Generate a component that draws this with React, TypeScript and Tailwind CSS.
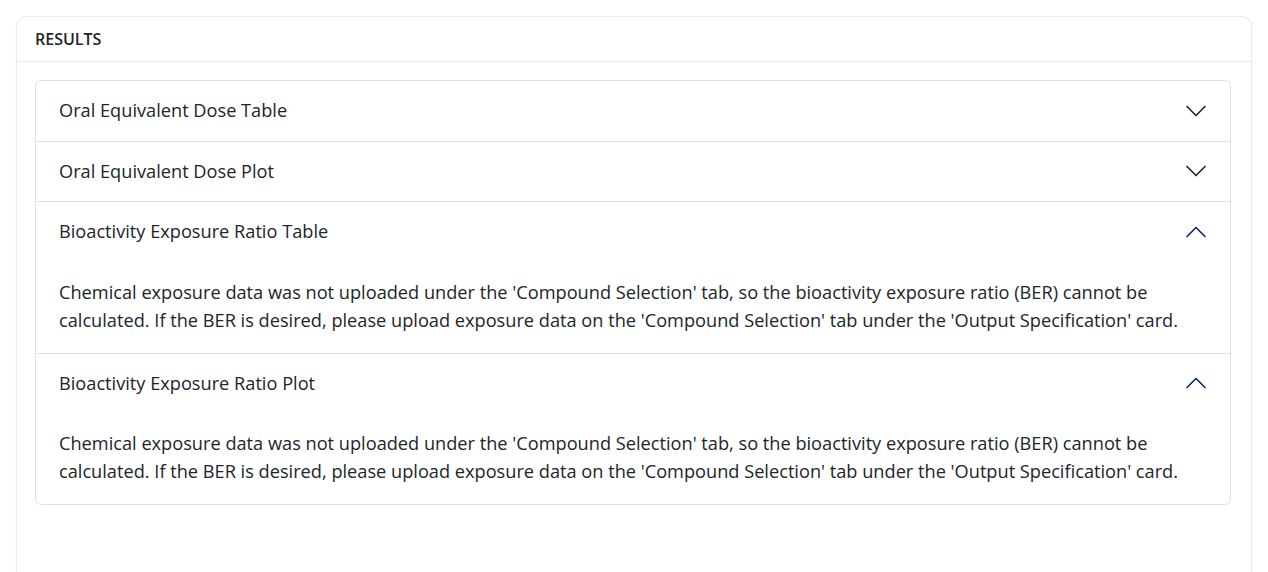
import { ReactNode } from "react";

const MESSAGE =
  "Chemical exposure data was not uploaded under the 'Compound Selection' tab, so the bioactivity exposure ratio (BER) cannot be calculated. If the BER is desired, please upload exposure data on the 'Compound Selection' tab under the 'Output Specification' card.";

function Chevron({ open }: { open: boolean }) {
  return (
    <svg
      viewBox="0 0 16 16"
      fill="none"
      stroke={open ? "#052c65" : "#212529"}
      strokeLinecap="round"
      strokeLinejoin="round"
      strokeWidth="1.1"
      className={open ? "h-6 w-6 rotate-180" : "h-6 w-6"}
    >
      <path d="M2 5L8 11L14 5" />
    </svg>
  );
}

function AccordionItem({
  title,
  open = false,
  children,
  last = false,
}: {
  title: string;
  open?: boolean;
  children?: ReactNode;
  last?: boolean;
}) {
  return (
    <div className={last ? "" : "border-b border-[#dee2e6]"}>
      {/* Header */}
      <div className="flex h-[59.5px] items-center justify-between pl-[23px] pr-[22px]">
        <span className="text-[18.2px] text-[#212529]">{title}</span>
        <Chevron open={open} />
      </div>

      {/* Body */}
      {open && (
        <div className="px-[23px] pt-[16px] pb-[19px] text-[18.2px] leading-[28px] text-[#212529]">
          {children}
        </div>
      )}
    </div>
  );
}

export default function App() {
  return (
    <div
      className="min-h-[572px] bg-white pt-4"
      style={{ fontFamily: "'Open Sans', 'Noto Sans', sans-serif" }}
    >
      <section className="mx-4 min-h-[600px] rounded-[10px] border border-[#ebebeb] bg-white shadow-[0_1px_3px_rgba(0,0,0,0.05)]">
        {/* Card Header */}
        <div className="flex h-[45px] items-center border-b border-[#ebebeb] px-[18px]">
          <h2 className="text-[16px] font-semibold text-[#212529]">RESULTS</h2>
        </div>

        {/* Card Body */}
        <div className="pl-[18px] pr-[20px] pt-[18px]">
          <div className="rounded-[6px] border border-[#dee2e6]">
            <AccordionItem title="Oral Equivalent Dose Table" />
            <AccordionItem title="Oral Equivalent Dose Plot" />
            <AccordionItem title="Bioactivity Exposure Ratio Table" open>
              {MESSAGE}
            </AccordionItem>
            <AccordionItem title="Bioactivity Exposure Ratio Plot" open last>
              {MESSAGE}
            </AccordionItem>
          </div>
        </div>
      </section>
    </div>
  );
}
